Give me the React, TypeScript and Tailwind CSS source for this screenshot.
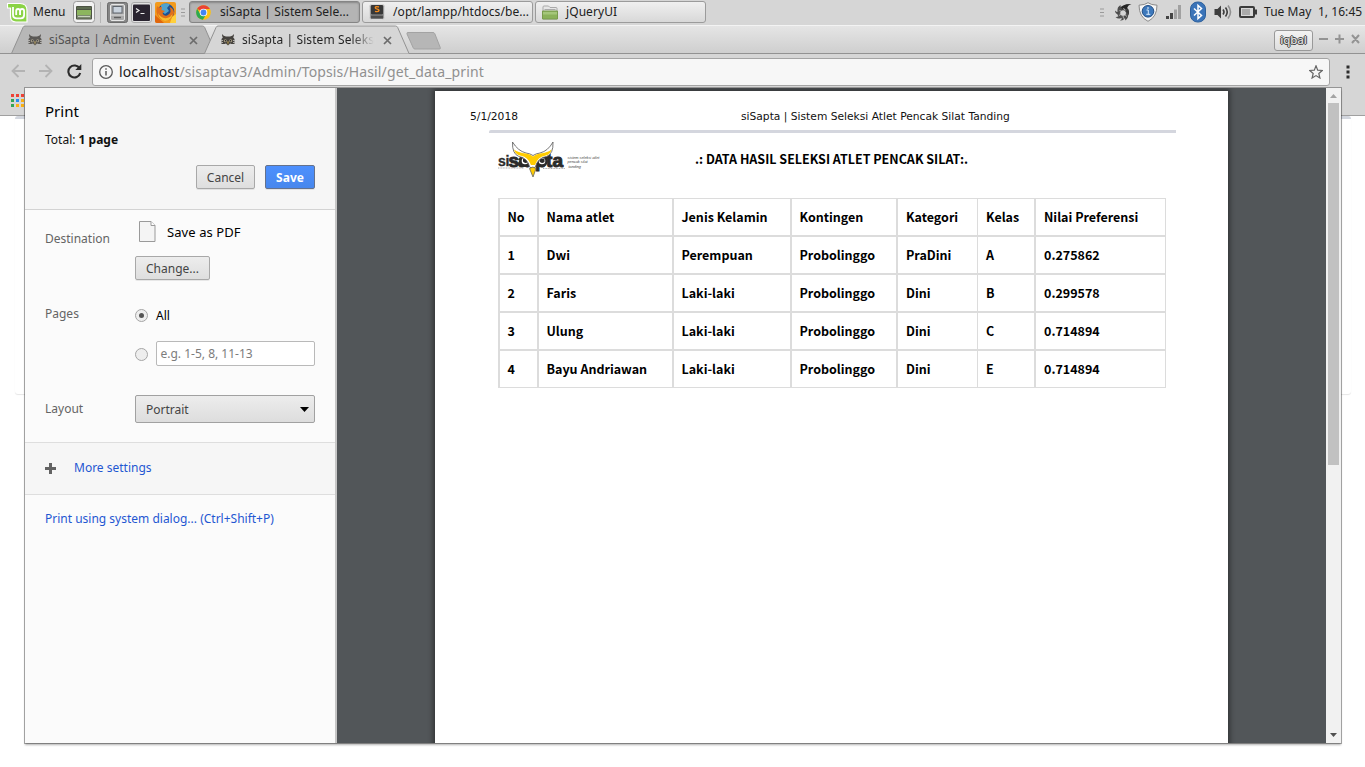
import React from "react";

const athletes = [
  ["1", "Dwi", "Perempuan", "Probolinggo", "PraDini", "A", "0.275862"],
  ["2", "Faris", "Laki-laki", "Probolinggo", "Dini", "B", "0.299578"],
  ["3", "Ulung", "Laki-laki", "Probolinggo", "Dini", "C", "0.714894"],
  ["4", "Bayu Andriawan", "Laki-laki", "Probolinggo", "Dini", "E", "0.714894"],
];
const headings = ["No", "Nama atlet", "Jenis Kelamin", "Kontingen", "Kategori", "Kelas", "Nilai Preferensi"];

function Grip() {
  return (
    <svg width="5" height="9" viewBox="0 0 5 9" className="shrink-0">
      <path d="M0 1h4M0 4.500h4M0 8h4" stroke="#9a9a9a" strokeWidth="1" />
    </svg>
  );
}

function MintLogo() {
  return (
    <svg width="21" height="21" viewBox="0 0 21 21" className="shrink-0">
      <path d="M0.500 1.500h12.500q7 0 7 7v11.500h-11q-5.500 0-5.500-5.500V6H0.500z" fill="#8bd346" stroke="#fff" strokeWidth="1.200" />
      <path d="M6 5v7.500q0 3.800 3.800 3.800h4q3.300 0 3.300-3.300V9q0-2-2-2t-2 2v4M13 13V9q0-2-1.900-2T9.200 9v4" fill="none" stroke="#fff" strokeWidth="1.800" />
    </svg>
  );
}

function DesktopIcon() {
  return (
    <svg width="22" height="22" viewBox="0 0 22 22" className="shrink-0">
      <rect x="0.500" y="0.500" width="21" height="21" rx="3" fill="#f2f2f2" stroke="#9a9a9a" />
      <rect x="3" y="5" width="16" height="13.500" rx="1" fill="#4c5343" />
      <path d="M4 9h14v5H4z" fill="#8cb55e" />
      <path d="M4 6h14v2H4z" fill="#5d6b50" />
      <rect x="4" y="14" width="14" height="3.500" fill="#7d8a70" />
      <path d="M5 15.500h12" stroke="#c8d3bd" />
    </svg>
  );
}

function FilesIcon() {
  return (
    <svg width="21" height="21" viewBox="0 0 21 21" className="shrink-0">
      <rect x="0.500" y="0.500" width="20" height="20" rx="2" fill="#858585" stroke="#6c6c6c" />
      <rect x="3.500" y="2.500" width="14" height="16" rx="1.500" fill="#a9a9a9" stroke="#e6e6e6" />
      <rect x="6" y="4.500" width="9" height="6.500" fill="#c9d2dc" stroke="#5f656c" />
      <path d="M4 13h13" stroke="#ddd" />
      <path d="M7 15.500h7" stroke="#5f5f5f" strokeWidth="1.400" />
    </svg>
  );
}

function TerminalIcon() {
  return (
    <svg width="21" height="21" viewBox="0 0 21 21" className="shrink-0">
      <rect x="0.500" y="0.500" width="20" height="20" rx="2.500" fill="#e2e2e2" stroke="#aaa" />
      <rect x="2" y="2.500" width="17" height="16.500" rx="1" fill="#2a2430" />
      <path d="M5 6.500l3 2-3 2M9.500 11.500h4" fill="none" stroke="#eee" strokeWidth="1.200" />
    </svg>
  );
}

function FirefoxIcon() {
  return (
    <svg width="21" height="21" viewBox="0 0 21 21" className="shrink-0">
      <rect width="21" height="21" rx="2" fill="#f39a1c" />
      <path d="M0 13L9 21H2q-2 0-2-2z" fill="#e0660c" />
      <circle cx="11" cy="9.800" r="8.300" fill="#20508f" />
      <path d="M6 3q4-3 9-.5l-3 3.500 2 3-4 3-4-3z" fill="#4fa3cf" />
      <path d="M2 4q1 1 2.500 1.500L7 4.500 6.500 8l3.500 1-2.500 2q1 3.500 4.500 2.500 2.500-.8 3.500-3.500.5-3-1-5 4 1 4.500 5.500-.5 7.500-8 8.500Q2.500 17.500 1.500 10 1.300 6.500 2 4z" fill="#e2701b" />
      <path d="M3 11q3 6 9 5 4-1 5.500-4-1 6.500-7.500 7-6-1.500-7-8z" fill="#f8bb2d" />
      <path d="M17 15l4-3v9h-6z" fill="#ffd03c" />
    </svg>
  );
}

function ChromeIcon() {
  return (
    <svg width="15" height="15" viewBox="0 0 16 16" className="shrink-0">
      <circle cx="8" cy="8" r="7.800" fill="#fbc116" />
      <path d="M8 8L1.200 4.100A7.800 7.800 0 0 1 14.800 4.300H8z" fill="#ea4335" />
      <path d="M1.200 4.100A7.800 7.800 0 0 0 7.300 15.800L11 9.800 8 8 4.600 9.600z" fill="#2da94f" />
      <circle cx="8" cy="8" r="4" fill="#fff" />
      <circle cx="8" cy="8" r="3.100" fill="#4285f4" />
    </svg>
  );
}

function SublimeIcon() {
  return (
    <svg width="16" height="16" viewBox="0 0 16 16" className="shrink-0">
      <rect x="0.500" y="0.500" width="15" height="15" rx="2" fill="#9a9a9a" stroke="#d8d8d8" />
      <rect x="2" y="1" width="12" height="9.500" rx="1" fill="#383838" />
      <path d="M2 11.500h12v3H2z" fill="#4e4e4e" />
      <path d="M10 3Q6.300 2 6.300 3.800q.2.900 1.900 1.300 2 .5 1.700 1.700-.5 1.300-3.900.6" fill="none" stroke="#f28a1c" strokeWidth="1.400" />
    </svg>
  );
}

function FolderIcon() {
  return (
    <svg width="16" height="15" viewBox="0 0 16 15" className="shrink-0">
      <path d="M1 14V2q0-1 1-1h4.500l1.500 1.500h6q1 0 1 1V14z" fill="#e6e6e6" stroke="#a9a9a9" />
      <path d="M2.500 4.500h11" stroke="#aaa" />
      <path d="M0.500 6h15v8h-15z" fill="#8ab15a" stroke="#789a4e" />
      <path d="M1 7h14v2.500H1z" fill="#a4c67a" />
    </svg>
  );
}

function OwlFavicon({ faded }: { faded?: boolean }) {
  return (
    <svg width="14" height="12" viewBox="0 0 14 12" className={faded ? "shrink-0 opacity-80" : "shrink-0"}>
      <path d="M1 0q1.500 2 4 2.500h4Q11.500 2 13 0q0 2.500-.8 3.500L13.500 5v5h-3L9 9.500 7 11.500 5 9.500 3.500 10h-3V5l1.300-1.500Q1 2.500 1 0z" fill="#45423e" />
      <path d="M0 6.500h2M12 6.500h2M0 8.500h2M12 8.500h2" stroke="#b0aeaa" strokeWidth="1" />
      <circle cx="4.300" cy="6.800" r="1.500" fill="#a39b83" />
      <circle cx="9.700" cy="6.800" r="1.500" fill="#a39b83" />
      <circle cx="4.500" cy="6.800" r=".7" fill="#222" />
      <circle cx="9.500" cy="6.800" r=".7" fill="#222" />
      <path d="M6.200 7.500h1.600L7 11z" fill="#c4a54d" />
    </svg>
  );
}

function CloseMark() {
  return (
    <svg width="9" height="9" viewBox="0 0 9 9" className="shrink-0">
      <path d="M1 1l7 7M8 1L1 8" stroke="#6c6c6c" strokeWidth="1.700" />
    </svg>
  );
}

function TrayIcons() {
  return (
    <div className="flex items-center">
      <svg width="17" height="18" viewBox="0 0 17 18" className="ml-[7px]">
        <circle cx="8" cy="10" r="4.200" fill="none" stroke="#555" strokeWidth="3.200" />
        <path d="M4 6.500Q7 .5 16.500 1 12.500 2.200 12 6z" fill="#262626" />
        <path d="M2.500 8Q2 4 5.500 2 5 4.500 7.500 6zM3.500 11.500Q0 11 0 7.500q1.500 2 4.500 1.500zM6 15q-3 1.500-5.500-1 3 .3 4-2zM9.500 14.500Q9 18 5 17.500q2.500-1 2.500-3.500zM13 11q.8 4-3 6.500.8-3-1.500-4z" fill="#4d4d4d" />
        <path d="M12.500 5q2.500 3 1 7-1-3-3.500-3.500z" fill="#3a3a3a" />
        <path d="M8.500 5l1.500 2.500M4.500 7.500l2.500 1M4 12.500l2.500-1.500M8.500 15.500l-.5-3M12 13.500l-2.500-2" stroke="#c5c5c5" strokeWidth=".8" />
        <circle cx="8.200" cy="10" r="2.600" fill="#d6d6d6" />
      </svg>
      <svg width="20" height="20" viewBox="0 0 20 20" className="ml-[6px]">
        <path d="M10 .7Q13 3 19 3.200 19 15 10 19.300 1 15 1 3.200 7 3 10 .7z" fill="#f5f5f5" stroke="#8a8a8a" />
        <circle cx="10" cy="9.300" r="5.800" fill="#3d78bb" stroke="#1f4d85" />
        <path d="M8.500 8h1.800v4.300M8.300 12.300h4" stroke="#d8ecff" strokeWidth="1" fill="none" />
        <circle cx="10" cy="6" r=".8" fill="#fff" />
      </svg>
      <svg width="16" height="14" viewBox="0 0 16 14" className="ml-[8px]">
        <path d="M0 11h3v3H0zM4 8h3v6H4z" fill="#444" />
        <path d="M8 4.500h3V14H8zM12 0h3v14h-3z" fill="#a1a1a1" />
      </svg>
      <svg width="16" height="22" viewBox="0 0 16 22" className="ml-[8px]">
        <rect x=".5" y="1" width="15" height="20" rx="7" fill="#3b74b8" stroke="#2d609c" />
        <path d="M4 7.500l7.500 7L8 17.500v-13l3.500 3-7.500 7" fill="none" stroke="#fff" strokeWidth="1.500" />
      </svg>
      <svg width="19" height="16" viewBox="0 0 19 16" className="ml-[8px]">
        <path d="M.5 5h3L7 1.500v13L3.500 11h-3z" fill="#3d3d3d" />
        <path d="M9 5.500q2 2.500 0 5M11.500 3.500q3.500 4.500 0 9" fill="none" stroke="#3d3d3d" strokeWidth="1.600" />
        <path d="M14 1.500q5 6.500 0 13" fill="none" stroke="#909090" strokeWidth="1.600" />
      </svg>
      <svg width="18" height="12" viewBox="0 0 18 12" className="ml-[6px]">
        <rect x="1" y="1" width="14" height="10" rx="1" fill="#d6d6d6" stroke="#3b3b3b" strokeWidth="2" />
        <rect x="3" y="3" width="8" height="6" fill="#aaa" />
        <path d="M15.500 3.500H18v5h-2.500z" fill="#3b3b3b" />
      </svg>
    </div>
  );
}

function TaskButton({ icon, label, active }: { icon: React.ReactNode; label: string; active?: boolean }) {
  return (
    <div
      className={
        active
          ? "flex h-[22px] w-[171px] items-center gap-[9px] rounded-[3px] border border-[#858585] bg-[#b4b4b4] pl-[6px] text-[12px] tracking-[0.08px] whitespace-nowrap text-[#202020] shadow-[inset_0_1px_2px_rgba(0,0,0,0.25)]"
          : "flex h-[22px] w-[171px] items-center gap-[8px] rounded-[3px] border border-[#9b9b9b] bg-gradient-to-b from-[#f0f0f0] to-[#d8d8d8] pl-[6px] text-[12px] tracking-[0.08px] whitespace-nowrap text-[#202020]"
      }
    >
      {icon}
      <span className="-mt-px">{label}</span>
    </div>
  );
}

function DesktopPanel() {
  return (
    <div className="flex h-[25px] shrink-0 items-center bg-[#d6d6d6] pb-px pl-[7px] text-[12px] text-[#222]">
      <MintLogo />
      <span className="-mt-px ml-[5px] w-[40px] text-[12px]">Menu</span>
      <DesktopIcon />
      <div className="mx-[5px] h-[21px] w-px bg-[#b5b5b5]" />
      <div className="flex gap-[3px] pl-[1px]">
        <FilesIcon />
        <TerminalIcon />
        <FirefoxIcon />
      </div>
      <div className="ml-[5px] w-[8px]">
        <Grip />
      </div>
      <div className="flex gap-[2px]">
        <TaskButton icon={<ChromeIcon />} label="siSapta | Sistem Sele..." active />
        <TaskButton icon={<SublimeIcon />} label="/opt/lampp/htdocs/be..." />
        <TaskButton icon={<FolderIcon />} label="jQueryUI" />
      </div>
      <div className="ml-auto flex items-center pr-[3px]">
        <Grip />
        <div className="pl-[3px]">
          <TrayIcons />
        </div>
        <span className="-mt-px ml-[7px] w-[98px] tracking-[0.06px] whitespace-pre">Tue May  1, 16:45</span>
      </div>
    </div>
  );
}

function Tab({ title, active }: { title: string; active?: boolean }) {
  return (
    <div className={active ? "relative z-10 -ml-[13px] h-[29px] w-[206px]" : "relative h-[29px] w-[206px]"}>
      <svg width="206" height="29" viewBox="0 0 206 29" className="absolute inset-0">
        <path d="M0.500 28.500L12 2.500q.7-1.500 2-1.500h177.500q1.500 0 2.200 1.500L205 28.500" fill={active ? "#d6d6d6" : "#b7b7b7"} stroke="#929292" />
        {!active && <path d="M0 28.500h206" stroke="#929292" />}
      </svg>
      <div className="relative flex h-full items-center pl-[17px]">
        <OwlFavicon faded={!active} />
        <span
          className={
            active
              ? "ml-[7px] w-[136px] overflow-hidden bg-gradient-to-r from-[#222] from-80% to-[#d6d6d6] to-97% bg-clip-text text-[12px] tracking-[0.1px] whitespace-nowrap text-transparent"
              : "ml-[7px] w-[139px] overflow-hidden text-[12px] tracking-[0.05px] whitespace-nowrap text-[#505050]"
          }
        >
          {title}
        </span>
        <div className={active ? "ml-[5px] pt-px" : "ml-[1px] pt-px"}>
          <CloseMark />
        </div>
      </div>
    </div>
  );
}

function TabStrip() {
  return (
    <div className="relative flex h-[29px] shrink-0 border-t border-[#f3f3f3] bg-gradient-to-b from-[#e5e5e5] to-[#cecece]">
      <div className="absolute inset-x-0 bottom-0 h-px bg-[#929292]" />
      <div className="-mt-px flex pl-[11px]">
        <Tab title="siSapta | Admin Event" />
        <Tab title="siSapta | Sistem Seleksi" active />
        <svg width="36" height="20" viewBox="0 0 36 20" className="mt-[6px] -ml-[4px]">
          <path d="M2 1.500h25q1.200 0 1.800 1.200l5.500 14q.4 1.300-1 1.300H9q-1.200 0-1.700-1L1 3Q.5 1.500 2 1.500z" fill="#b6b6b6" stroke="#a3a3a3" />
        </svg>
      </div>
      <div className="relative ml-auto flex items-center gap-[6px] pr-[5px] pb-px">
        <div className="mt-[1px] flex h-[21px] w-[39px] items-center justify-center rounded-[3px] border border-[#999] bg-gradient-to-b from-[#f3f3f3] to-[#dedede] text-[11.500px] font-medium tracking-[-0.1px] text-[#e0e0e0] [text-shadow:0_1px_0_#444,0_-1px_0_#444,1px_0_0_#444,-1px_0_0_#444]">
          iqbal
        </div>
        <svg width="41" height="10" viewBox="0 0 41 10" className="-mt-px">
          <path d="M0 5h9M16 5h9M20.500 .5v9M33 1l7 8M40 1l-7 8" stroke="#949494" strokeWidth="2" />
        </svg>
      </div>
    </div>
  );
}

function AddressBar() {
  return (
    <div className="flex h-[34px] shrink-0 items-center pl-[11px]">
      <svg width="42" height="14" viewBox="0 0 42 14">
        <path d="M14 7H2M7.500 1l-6 6 6 6M28 7h12M34.500 1l6 6-6 6" fill="none" stroke="#b3b3b3" strokeWidth="1.800" />
      </svg>
      <svg width="15" height="15" viewBox="0 0 15 15" className="ml-[14px]">
        <path d="M12.600 4.500A6 6 0 1 0 13.200 9" fill="none" stroke="#2c2c2c" strokeWidth="2.100" />
        <path d="M14.300 0v6H8.300z" fill="#2c2c2c" />
      </svg>
      <div className="mt-[2px] ml-[10px] flex h-[28px] w-[1238px] items-center rounded-[3px] border border-[#a4a4a4] bg-[#f7f7f7] pl-[6px]">
        <svg width="14" height="14" viewBox="0 0 14 14">
          <circle cx="7" cy="7" r="6.300" fill="none" stroke="#5a5a5a" strokeWidth="1.300" />
          <path d="M7 6v4.500M7 3.300v1.500" stroke="#5a5a5a" strokeWidth="1.500" />
        </svg>
        <span className="-mt-[2px] ml-[6px] text-[14px] tracking-[0.135px] text-[#909090]">
          <span className="text-[#222]">localhost</span>/sisaptav3/Admin/Topsis/Hasil/get_data_print
        </span>
        <svg width="14" height="14" viewBox="0 0 14 14" className="mr-[6px] ml-auto">
          <path d="M7 .8l1.700 4.300 4.600.4-3.500 3 1.100 4.500L7 10.600 3.100 13l1.100-4.500-3.500-3 4.600-.4z" fill="none" stroke="#666" strokeWidth="1.200" />
        </svg>
      </div>
      <svg width="4" height="14" viewBox="0 0 4 14" className="mt-[2px] ml-[16px]">
        <path d="M.5 .5h3v3h-3zM.5 5.500h3v3h-3zM.5 10.500h3v3h-3z" fill="#2d2d2d" />
      </svg>
    </div>
  );
}

function BookmarkBar() {
  return (
    <div className="h-[28px] shrink-0 border-b border-[#a0a0a0] pt-[6px] pl-[11px]">
      <svg width="13" height="13" viewBox="0 0 13 13">
        <path d="M0 0h3v3H0zM5 0h3v3H5zM10 0h3v3h-3z" fill="#ee4236" />
        <path d="M0 5h3v3H0zM0 10h3v3H0z" fill="#31a457" />
        <path d="M5 5h3v3H5z" fill="#258df2" />
        <path d="M10 5h3v3h-3zM5 10h3v3H5zM10 10h3v3h-3z" fill="#fab014" />
      </svg>
    </div>
  );
}

function PrintSettings() {
  const button =
    "flex h-[24px] items-center justify-center rounded-[2px] border border-[#a8a8a8] bg-gradient-to-b from-[#ededed] to-[#dedede] pt-px text-[12px] text-[#444] shadow-[0_1px_0_rgba(0,0,0,0.08)]";
  return (
    <div className="flex w-[312px] shrink-0 flex-col border-r-2 border-[#c6c6c6] bg-[#fbfbfb] text-[12px] leading-[18px]">
      <div className="h-[122px] border-b border-[#d3d3d3] bg-[#f6f6f6] px-[20px] pt-[12px]">
        <h1 className="text-[15px] leading-[22px] text-black">Print</h1>
        <p className="mt-[9px] text-[#111]">
          Total: <b>1 page</b>
        </p>
        <div className="mt-[16px] flex justify-end gap-[10px]">
          <div className={button + " w-[59px]"}>Cancel</div>
          <div className="flex h-[24px] w-[50px] items-center justify-center rounded-[2px] border border-[#65728c] bg-gradient-to-b from-[#4d90fe] to-[#4787ed] pt-px text-[12px] font-bold text-white shadow-[0_1px_0_rgba(0,0,0,0.08)]">
            Save
          </div>
        </div>
      </div>
      <div className="h-[233px] border-b border-[#dedede] px-[20px]">
        <div className="flex h-[82px] pt-[12px]">
          <span className="w-[90px] pt-[8px] text-[#646464]">Destination</span>
          <div>
            <div className="flex items-center gap-[11px] pl-[4px] text-[13px] tracking-[0.08px] text-black">
              <svg width="17" height="21" viewBox="0 0 17 21" className="-mt-px">
                <path d="M.5 .5h11.500l4 4v16H.5z" fill="#f4f4f4" stroke="#9a9a9a" />
                <path d="M12 .5v4h4" fill="#fff" stroke="#9a9a9a" />
              </svg>
              <span>Save as PDF</span>
            </div>
            <div className={button + " mt-[14px] w-[75px]"}>Change...</div>
          </div>
        </div>
        <div className="flex h-[93px] pt-[13px]">
          <span className="w-[90px] text-[#646464]">Pages</span>
          <div className="w-[180px]">
            <div className="mt-[2px] flex items-center gap-[8px] text-black">
              <span className="-mt-px flex h-[13px] w-[13px] items-center justify-center rounded-full border border-[#a5a5a5] bg-[#eee]">
                <span className="h-[5px] w-[5px] rounded-full bg-[#555]" />
              </span>
              All
            </div>
            <div className="mt-[16px] flex items-center gap-[8px]">
              <span className="mt-px h-[13px] w-[13px] rounded-full border border-[#a5a5a5] bg-[#eee]" />
              <span className="flex h-[25px] w-[159px] items-center rounded-[2px] border border-[#b9b9b9] bg-white pl-[3.500px] text-[#7c7c7c]">
                e.g. 1-5, 8, 11-13
              </span>
            </div>
          </div>
        </div>
        <div className="flex pt-[10px]">
          <span className="w-[90px] pt-[5px] text-[#646464]">Layout</span>
          <div className="flex h-[28px] w-[180px] items-center justify-between rounded-[2px] border border-[#a1a1a1] bg-gradient-to-b from-[#ededed] to-[#dddddd] pr-[5px] pl-[10px] text-[#444]">
            <span className="pt-[2px]">Portrait</span>
            <svg width="9" height="5" viewBox="0 0 9 5">
              <path d="M0 0h9L4.500 5z" fill="#000" />
            </svg>
          </div>
        </div>
      </div>
      <div className="flex h-[52px] items-center gap-[18px] border-b border-[#dedede] bg-[#f6f6f6] pl-[20px] text-[#1f57d2]">
        <svg width="11" height="11" viewBox="0 0 11 11">
          <path d="M4 0h3v4h4v3H7v4H4V7H0V4h4z" fill="#636363" />
        </svg>
        <span className="-mt-[2px]">More settings</span>
      </div>
      <p className="pt-[15px] pl-[20px] text-[#1f57d2]">Print using system dialog... (Ctrl+Shift+P)</p>
    </div>
  );
}

function SisaptaLogo() {
  return (
    <svg width="104" height="38" viewBox="0 0 104 38" className="shrink-0">
      <g fill="#2b2b2b" stroke="#2b2b2b" fontFamily="'Liberation Sans', Arial, sans-serif" fontWeight="700">
        <text x="0 7.500" y="24.500" fontSize="14" strokeWidth=".3">si</text>
        <text x="10.500 20 37 48 54.500" y="25.500" fontSize="19" strokeWidth="1">sapta</text>
      </g>
      <circle cx="27" cy="20" r="4.600" fill="#fff" stroke="#2b2b2b" strokeWidth="2.600" />
      <circle cx="44" cy="20" r="4.600" fill="#fff" stroke="#2b2b2b" strokeWidth="2.600" />
      <path d="M25 17.500h5v3.500q-3 2-5-.5zM41.500 17.500h5v3.500q-3 2-5-.5z" fill="#2b2b2b" />
      <path d="M0 27h26M45 27.500h22" stroke="#888" strokeWidth=".7" strokeDasharray="1 .6" />
      <path d="M14.500 1Q20 10 28 12q4 .5 7 2.500 3-2 7-2.500 8-2 13-11 .5 12-6.500 14.500-8.500 1-11.500 11h-5q-3-10-11-11Q14 13 14.500 1z" fill="#fff" stroke="#555" strokeWidth=".8" />
      <path d="M16 8.500Q20 11.500 28 12.500q4 .5 7 3 3-2.500 7-3Q50 11.500 53.500 8.500q-1 5-6.500 6.300-7 1-10 9.200h-4Q30 16 23 14.800 17 13.500 16 8.500z" fill="#fc0" />
      <path d="M31.500 27.500q3.500-3 6.500 0L35 36z" fill="#fc0" stroke="#666" strokeWidth=".8" />
      <g fill="#444" fontFamily="'Liberation Sans', Arial, sans-serif" fontSize="3.800" fontStyle="italic">
        <text x="69.500" y="18">sistem seleksi atlet</text>
        <text x="69.500" y="22.300">pencak silat</text>
        <text x="70.500" y="26.500">tanding</text>
      </g>
    </svg>
  );
}

function ResultTable() {
  const cell = (col: number) => (col === 4 || col === 6 ? "border-r" : "border-r-2");
  const pad = (col: number) => (col < 4 ? " pl-[7.500px] " : " pl-[8px] ");
  return (
    <table className="ml-[63px] w-[668px] table-fixed border-separate border-spacing-0 border-t border-l-2 border-[#dcdcdc] text-left text-[12.500px] leading-[18px] text-black">
      <colgroup>
        <col className="w-[39px]" />
        <col className="w-[135px]" />
        <col className="w-[118px]" />
        <col className="w-[106px]" />
        <col className="w-[80px]" />
        <col className="w-[58px]" />
        <col className="w-[130px]" />
      </colgroup>
      <thead>
        <tr className="h-[38px]">
          {headings.map((text, col) => (
            <th key={text} className={"border-b-2 border-[#dcdcdc] py-0 font-bold whitespace-nowrap" + pad(col) + cell(col)}>
              {text}
            </th>
          ))}
        </tr>
      </thead>
      <tbody>
        {athletes.map((row, index) => (
          <tr key={row[0]} className={index === 3 ? "h-[37px]" : "h-[38px]"}>
            {row.map((text, col) => (
              <td
                key={col}
                className={
                  "border-[#dcdcdc] py-0 font-bold whitespace-nowrap" + pad(col) + cell(col) + (index === 3 ? " border-b" : " border-b-2")
                }
              >
                {text}
              </td>
            ))}
          </tr>
        ))}
      </tbody>
    </table>
  );
}

function Preview() {
  return (
    <div className="flex flex-1 overflow-hidden bg-[#525659] pt-[3px] pl-[98px]">
      <div className="h-[660px] w-[793px] shrink-0 bg-white font-['Noto_Sans_CJK_SC','Noto_Sans',sans-serif] shadow-[0_0_5px_2px_rgba(0,0,0,0.4)]">
        <div className="flex h-[39px] items-center pt-[13px] pl-[35px] font-['DejaVu_Sans',sans-serif] text-[10.700px] leading-[16px] text-[#111]">
          <span className="w-[271px]">5/1/2018</span>
          <span>siSapta | Sistem Seleksi Atlet Pencak Silat Tanding</span>
        </div>
        <div className="ml-[54px] h-[3px] w-[687px] rounded-tl-[2px] bg-[#d4d6de]" />
        <div className="flex h-[65px] pt-[8px] pl-[63px]">
          <SisaptaLogo />
          <h2 className="ml-[93px] pt-[8px] text-[12.500px] leading-[20px] font-bold whitespace-nowrap text-black">
            .: DATA HASIL SELEKSI ATLET PENCAK SILAT:.
          </h2>
        </div>
        <ResultTable />
      </div>
    </div>
  );
}

function Scrollbar() {
  return (
    <div className="flex w-[15px] shrink-0 flex-col items-center bg-[#f1f1f1]">
      <svg width="15" height="15" viewBox="0 0 15 15">
        <path d="M4 10h7L7.500 6z" fill="#a3a3a3" />
      </svg>
      <div className="h-[362px] w-[11px] bg-[#c1c1c1]" />
      <svg width="15" height="15" viewBox="0 0 15 15" className="mt-auto">
        <path d="M4 5h7L7.500 9z" fill="#505050" />
      </svg>
    </div>
  );
}

export default function App() {
  return (
    <div className="relative flex h-[767px] w-[1365px] flex-col overflow-hidden bg-white font-['Noto_Sans',sans-serif]">
      <div className="flex flex-col bg-[#d6d6d6]">
        <DesktopPanel />
        <TabStrip />
        <AddressBar />
        <BookmarkBar />
      </div>
      <div className="mr-[14px] ml-[15px] h-[278px] rounded-[3px] border-t-[3px] border-[#d2d6de] bg-white shadow-[0_1px_1px_rgba(0,0,0,0.1)]" />
      <div className="absolute top-[88px] left-[25px] flex h-[655px] w-[1316px] shadow-[0_0_0_1px_rgba(0,0,0,0.3),0_2px_2px_rgba(0,0,0,0.3)]">
        <PrintSettings />
        <Preview />
        <Scrollbar />
      </div>
    </div>
  );
}
